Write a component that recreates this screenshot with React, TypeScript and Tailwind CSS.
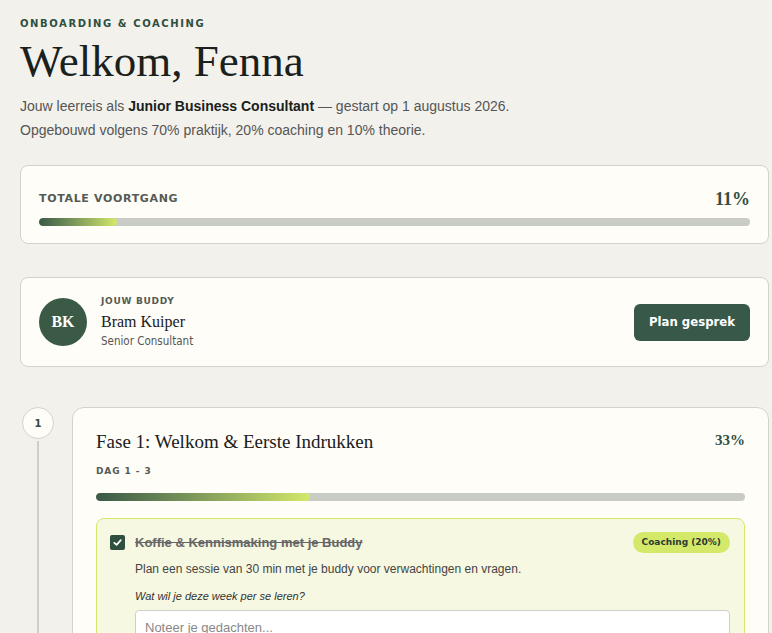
import React from "react";

const serif = { fontFamily: '"Liberation Serif", "DejaVu Serif", serif' };
const wide = { fontFamily: '"DejaVu Sans", "Liberation Sans", sans-serif' };
const narrow = { fontFamily: '"Liberation Sans Narrow", "DejaVu Sans Condensed", "Liberation Sans", sans-serif' };

function Bar({ pct }: { pct: number }) {
  return (
    <div className="h-2 w-full rounded-full bg-[#c9ccc4] overflow-hidden">
      <div
        className="h-full rounded-full bg-gradient-to-r from-[#3a5a46] to-[#d4e86a]"
        style={{ width: `${pct}%` }}
      />
    </div>
  );
}

export default function App() {
  return (
    <div
      className="min-h-[633px] bg-[#f3f1ec] text-[#1d2520] overflow-hidden"
      style={{ fontFamily: '"Liberation Sans", Arial, sans-serif' }}
    >
      <div className="ml-5 w-[749px] pt-[18px]">
        <div
          className="text-[10px] font-bold tracking-[0.16em] text-[#2f4f3f] leading-[12px]"
          style={wide}
        >
          ONBOARDING &amp; COACHING
        </div>
        <h1 className="mt-[5px] text-[45px] leading-[52px] text-[#1a201c]" style={serif}>
          Welkom, Fenna
        </h1>
        <p className="mt-[7px] text-[14px] leading-[24px] text-[#555]">
          Jouw leerreis als <b className="text-[#1a201c]">Junior Business Consultant</b> — gestart op 1 augustus 2026.
          <br />
          Opgebouwd volgens 70% praktijk, 20% coaching en 10% theorie.
        </p>

        <section className="mt-[23px] rounded-lg border border-[#d3d3cc] bg-[#fefdf8] px-[18px] pt-[20px] pb-[17px]">
          <div className="flex items-center justify-between">
            <span
              className="text-[11px] font-bold tracking-[0.06em] text-[#555a55]"
              style={wide}
            >
              TOTALE VOORTGANG
            </span>
            <span className="text-[18px] font-bold text-[#2f4f3f]" style={serif}>
              11%
            </span>
          </div>
          <div className="mt-[5px]">
            <Bar pct={11} />
          </div>
        </section>

        <section className="mt-[33px] flex items-center rounded-lg border border-[#d3d3cc] bg-[#fefdf8] px-[18px] h-[90px]">
          <div
            className="flex h-12 w-12 items-center justify-center rounded-full bg-[#3a5a46] text-[16px] font-bold text-white"
            style={serif}
          >
            BK
          </div>
          <div className="ml-[14px] flex flex-col">
            <span
              className="text-[9px] font-bold tracking-[0.08em] text-[#555a55] leading-[12px]"
              style={wide}
            >
              JOUW BUDDY
            </span>
            <span className="mt-[5px] text-[16px] leading-[20px] text-[#1a201c]" style={serif}>
              Bram Kuiper
            </span>
            <span className="mt-[1px] text-[11.5px] leading-[16px] text-[#555]" style={narrow}>
              Senior Consultant
            </span>
          </div>
          <button
            className="ml-auto h-[37px] w-[116px] rounded-md bg-[#38584a] text-[13px] font-bold text-white"
            style={narrow}
          >
            Plan gesprek
          </button>
        </section>

        <div className="mt-[40px] flex">
          <div className="flex w-[36px] shrink-0 flex-col items-center">
            <div
              className="flex h-8 w-8 items-center justify-center rounded-full border border-[#d3d3cc] bg-[#fefdf8] text-[10px] font-bold text-[#3a4a40]"
              style={wide}
            >
              1
            </div>
            <div className="w-[2px] flex-1 bg-[#cfcfc8] mt-[2px]" />
          </div>

          <section className="ml-[16px] flex-1 rounded-xl border border-[#d3d3cc] bg-[#fefdf8] px-[23px] pt-[22px] pb-6">
            <div className="flex items-start justify-between">
              <h2 className="text-[19px] leading-[24px] text-[#1a201c]" style={serif}>
                Fase 1: Welkom &amp; Eerste Indrukken
              </h2>
              <span className="text-[15px] font-bold text-[#2f4f3f] leading-[20px]" style={serif}>
                33%
              </span>
            </div>
            <div
              className="mt-[11px] text-[9px] font-bold tracking-[0.1em] text-[#555a55]"
              style={wide}
            >
              DAG 1 - 3
            </div>
            <div className="mt-[14px]">
              <Bar pct={33} />
            </div>

            <div className="mt-[17px] rounded-lg border border-[#d4e86a] bg-[#f6f8e2] pl-[13px] pr-[14px] pt-[13px] pb-4">
              <div className="flex items-center">
                <span className="flex h-[15px] w-[15px] items-center justify-center rounded-[2px] bg-[#2f4f3f]">
                  <svg viewBox="0 0 12 12" className="h-[11px] w-[11px]">
                    <path d="M2.5 6.3 L5 8.6 L9.6 3.4" fill="none" stroke="white" strokeWidth="1.9" strokeLinecap="round" strokeLinejoin="round" />
                  </svg>
                </span>
                <span className="ml-[10px] text-[13px] font-bold text-[#666] line-through">
                  Koffie &amp; Kennismaking met je Buddy
                </span>
                <span
                  className="ml-auto rounded-full bg-[#d4e86a] px-[9px] py-[4px] text-[9px] font-bold text-[#2b3a30]"
                  style={wide}
                >
                  Coaching (20%)
                </span>
              </div>
              <div className="ml-[25px]">
                <p className="mt-[7px] text-[12px] leading-[18px] text-[#444]">
                  Plan een sessie van 30 min met je buddy voor verwachtingen en vragen.
                </p>
                <p className="mt-[10px] text-[11px] italic text-[#333]">
                  Wat wil je deze week per se leren?
                </p>
                <textarea
                  className="mt-[5px] h-[60px] w-full resize-none rounded border border-[#cfcfc8] bg-white px-[9px] py-[7px] text-[13px] text-[#333] placeholder:text-[#888] outline-none"
                  placeholder="Noteer je gedachten..."
                />
              </div>
            </div>
          </section>
        </div>
      </div>
    </div>
  );
}
